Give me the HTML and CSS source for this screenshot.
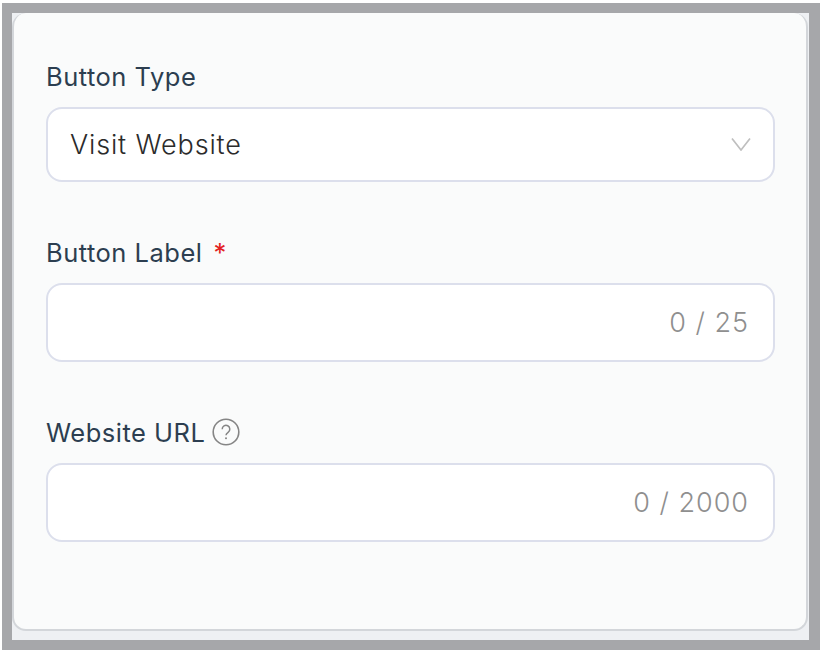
FILE: index.html
```html
<!DOCTYPE html>
<html lang="en">
<head>
<meta charset="utf-8">
<title>Button settings</title>
<link rel="stylesheet" href="styles.css">
</head>
<body>
<div class="frame">
  <div class="backdrop">
    <form class="card">
      <div class="field">
        <div class="label"><span>Button Type</span></div>
        <div class="control select">
          <span class="value">Visit Website</span>
          <svg class="chevron" width="20" height="14" viewBox="0 0 20 14" aria-hidden="true"><path d="M1 1.500L10 13L19 1.500" fill="none" stroke="#bfbfbf" stroke-width="1.700"/></svg>
        </div>
      </div>
      <div class="field">
        <div class="label"><span>Button Label</span><span class="req">*</span></div>
        <div class="control input"><span class="count">0 / 25</span></div>
      </div>
      <div class="field">
        <div class="label"><span>Website URL</span>
          <svg class="help" width="28" height="28" viewBox="0 0 28 28" aria-hidden="true"><circle cx="14" cy="14" r="12.800" fill="none" stroke="#858585" stroke-width="1.600"/><path d="M10.200 11.200a3.800 3.800 0 1 1 5.900 3.100c-1.400.9-2.100 1.500-2.100 3" fill="none" stroke="#858585" stroke-width="1.500"/><circle cx="14" cy="20.300" r="1" fill="#858585"/></svg>
        </div>
        <div class="control input"><span class="count">0 / 2000</span></div>
      </div>
    </form>
  </div>
</div>
</body>
</html>
```

FILE: styles.css
```css
* { box-sizing: border-box; }
html, body { margin: 0; padding: 0; background: #fff; }
body { width: 820px; height: 650px; padding: 3px 0 0 2px; font-family: Inter, "Liberation Sans", sans-serif; }
.frame { width: 818px; height: 647px; background: #a6a7aa; padding: 10px 11px 10px 10px; }
.backdrop { height: 627px; background: #eef0f3; }
.card {
  height: 618px;
  width: 796px;
  background: #fafbfb;
  border: 1px solid #d3d6da;
  border-width: 0 2px 2px 2px;
  border-radius: 14px;
  padding: 46px 32px 0 32px;
  display: flex;
  flex-direction: column;
  gap: 53px;
}
.label {
  display: flex;
  align-items: center;
  gap: 8px;
  height: 34px;
  margin-bottom: 14px;
  font-size: 25.500px;
  letter-spacing: 0.500px;
  color: #2c3e50;
}
.req { color: #e3201f; margin-left: 3px; }
.control {
  display: flex;
  align-items: center;
  width: 729px;
  background: #fff;
  border: 2px solid #dcdfec;
  border-radius: 16px;
}
.select { height: 75px; padding: 0 22px 0 22px; justify-content: space-between; }
.input { height: 79px; padding: 0 24px; justify-content: flex-end; }
.value { font-size: 27px; font-weight: 300; color: #2b2b2b; letter-spacing: 0.850px; }
.count { font-size: 27px; font-weight: 300; color: #8f8f8f; letter-spacing: 1px; }
.chevron { display: block; margin-top: -1px; }
.help { display: block; margin-left: -1px; margin-top: -1px; }
```
